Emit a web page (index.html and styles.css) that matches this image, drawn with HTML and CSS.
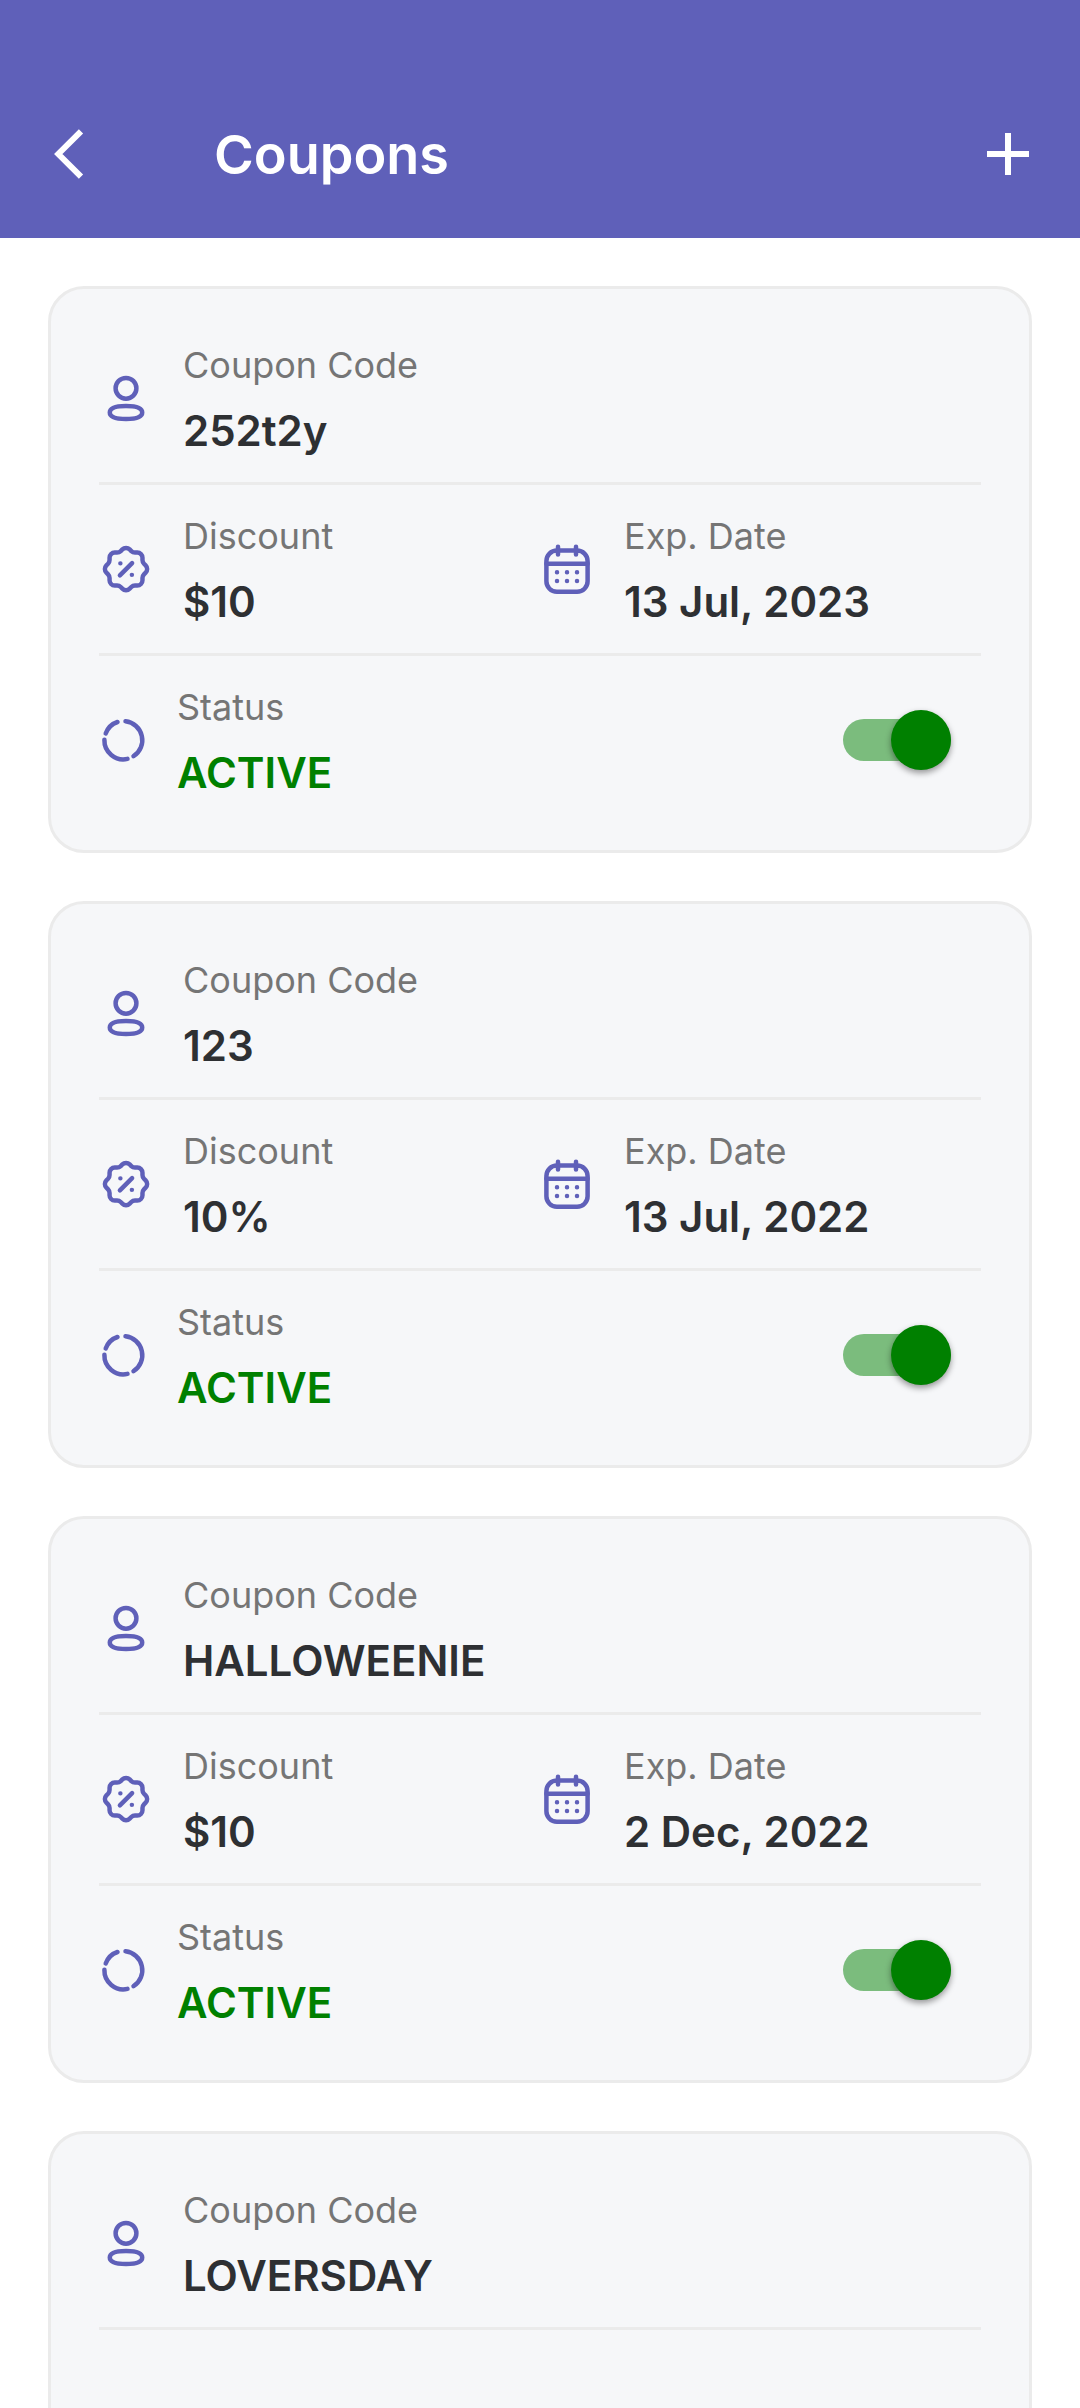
FILE: index.html
```html
<!DOCTYPE html>
<html lang="en">
<head>
    <meta charset="UTF-8">
    <meta name="viewport" content="width=device-width, initial-scale=1.0">
    <title>Coupons</title>
    <link rel="stylesheet" href="styles.css">
</head>
<body>
    <!-- Shared icons -->
    <svg class="sprite" aria-hidden="true">
        <symbol id="icon-user" viewBox="0 0 54 54" stroke-width="4.5">
            <circle cx="27" cy="17.3" r="10.4"/>
            <path d="M27 35c8.5 0 16.2 1.3 16.2 6.5S35.5 48 27 48s-16.200-1.300-16.200-6.500S18.500 35 27 35z"/>
        </symbol>
        <symbol id="icon-discount" viewBox="0.5 0.5 23 23" stroke-width="1.9">
            <path d="M5 7.2a2.2 2.2 0 0 1 2.2-2.2h1a2.2 2.2 0 0 0 1.550-.64l.7-.7a2.2 2.2 0 0 1 3.120 0l.7.7a2.2 2.2 0 0 0 1.550.64h1a2.2 2.2 0 0 1 2.2 2.2v1a2.2 2.2 0 0 0 .64 1.550l.7.7a2.2 2.2 0 0 1 0 3.120l-.7.7a2.2 2.2 0 0 0-.64 1.550v1a2.2 2.2 0 0 1-2.2 2.2h-1a2.2 2.2 0 0 0-1.550.64l-.7.7a2.2 2.2 0 0 1-3.120 0l-.7-.7a2.2 2.2 0 0 0-1.550-.64h-1a2.2 2.2 0 0 1-2.2-2.2v-1a2.2 2.2 0 0 0-.64-1.550l-.7-.7a2.2 2.2 0 0 1 0-3.120l.7-.7a2.2 2.2 0 0 0 .64-1.550z"/>
            <path d="M9.4 14.7l5.2-5.2M9.6 9.6h.01M14.5 14.5h.01"/>
        </symbol>
        <symbol id="icon-calendar" viewBox="0 0 54 54" stroke-width="4.5">
            <rect x="6.4" y="8.6" width="41.2" height="41.2" rx="10.5"/>
            <path d="M6.4 21.7h41.2M18 4.8v7.8M36 4.8v7.8"/>
            <path d="M17 30.3h.01M27 30.3h.01M37 30.3h.01M17 39h.01M27 39h.01M37 39h.01"/>
        </symbol>
        <symbol id="icon-status" viewBox="0 0 48 48" stroke-width="4.5">
            <path d="M26.5 5.3A19 19 0 0 1 34.5 40.2M28.5 42.9A19 19 0 0 1 5.4 23.8M6.7 17.5A19 19 0 0 1 18.5 6"/>
        </symbol>
    </svg>

    <header class="app-bar">
        <button class="icon-button" type="button" aria-label="Back">
            <svg viewBox="0 0 48 48"><path d="M33 1.300L10.300 24 33 46.700"/></svg>
        </button>
        <h1 class="app-title">Coupons</h1>
        <button class="icon-button" type="button" aria-label="Add coupon">
            <svg viewBox="0 0 48 48"><path d="M24 3v42M3 24h42"/></svg>
        </button>
    </header>

    <main class="coupon-list">
        <article class="coupon">
            <div class="row">
                <div class="field">
                    <svg class="icon"><use href="#icon-user"/></svg>
                    <div class="field-text">
                        <p class="label">Coupon Code</p>
                        <p class="value">252t2y</p>
                    </div>
                </div>
            </div>
            <div class="row">
                <div class="field">
                    <svg class="icon"><use href="#icon-discount"/></svg>
                    <div class="field-text">
                        <p class="label">Discount</p>
                        <p class="value">$10</p>
                    </div>
                </div>
                <div class="field">
                    <svg class="icon"><use href="#icon-calendar"/></svg>
                    <div class="field-text">
                        <p class="label">Exp. Date</p>
                        <p class="value">13 Jul, 2023</p>
                    </div>
                </div>
            </div>
            <div class="row">
                <div class="field">
                    <svg class="icon icon-small"><use href="#icon-status"/></svg>
                    <div class="field-text">
                        <label class="label" for="status-1">Status</label>
                        <p class="value active">ACTIVE</p>
                    </div>
                </div>
                <input class="switch" type="checkbox" id="status-1" checked>
            </div>
        </article>

        <article class="coupon">
            <div class="row">
                <div class="field">
                    <svg class="icon"><use href="#icon-user"/></svg>
                    <div class="field-text">
                        <p class="label">Coupon Code</p>
                        <p class="value">123</p>
                    </div>
                </div>
            </div>
            <div class="row">
                <div class="field">
                    <svg class="icon"><use href="#icon-discount"/></svg>
                    <div class="field-text">
                        <p class="label">Discount</p>
                        <p class="value">10%</p>
                    </div>
                </div>
                <div class="field">
                    <svg class="icon"><use href="#icon-calendar"/></svg>
                    <div class="field-text">
                        <p class="label">Exp. Date</p>
                        <p class="value">13 Jul, 2022</p>
                    </div>
                </div>
            </div>
            <div class="row">
                <div class="field">
                    <svg class="icon icon-small"><use href="#icon-status"/></svg>
                    <div class="field-text">
                        <label class="label" for="status-2">Status</label>
                        <p class="value active">ACTIVE</p>
                    </div>
                </div>
                <input class="switch" type="checkbox" id="status-2" checked>
            </div>
        </article>

        <article class="coupon">
            <div class="row">
                <div class="field">
                    <svg class="icon"><use href="#icon-user"/></svg>
                    <div class="field-text">
                        <p class="label">Coupon Code</p>
                        <p class="value">HALLOWEENIE</p>
                    </div>
                </div>
            </div>
            <div class="row">
                <div class="field">
                    <svg class="icon"><use href="#icon-discount"/></svg>
                    <div class="field-text">
                        <p class="label">Discount</p>
                        <p class="value">$10</p>
                    </div>
                </div>
                <div class="field">
                    <svg class="icon"><use href="#icon-calendar"/></svg>
                    <div class="field-text">
                        <p class="label">Exp. Date</p>
                        <p class="value">2 Dec, 2022</p>
                    </div>
                </div>
            </div>
            <div class="row">
                <div class="field">
                    <svg class="icon icon-small"><use href="#icon-status"/></svg>
                    <div class="field-text">
                        <label class="label" for="status-3">Status</label>
                        <p class="value active">ACTIVE</p>
                    </div>
                </div>
                <input class="switch" type="checkbox" id="status-3" checked>
            </div>
        </article>

        <article class="coupon">
            <div class="row">
                <div class="field">
                    <svg class="icon"><use href="#icon-user"/></svg>
                    <div class="field-text">
                        <p class="label">Coupon Code</p>
                        <p class="value">LOVERSDAY</p>
                    </div>
                </div>
            </div>
            <!-- details not loaded yet -->
            <div class="row"></div>
        </article>
    </main>
</body>
</html>
```

FILE: styles.css
```css
* {
    box-sizing: border-box;
}
body {
    display: flex;
    flex-direction: column;
    height: 100vh;
    margin: 0;
    background-color: #fff;
    color: #2e3033;
    font-family: Inter, "Liberation Sans", sans-serif;
}
h1, p {
    margin: 0;
}
svg {
    fill: none;
    stroke: currentColor;
    stroke-linecap: round;
    stroke-linejoin: round;
}
.sprite {
    display: none;
}

/* Top bar */
.app-bar {
    display: flex;
    align-items: center;
    flex-shrink: 0;
    padding: 118px 48px 48px;
    background-color: #5f60b9;
    color: #fff;
}
.app-title {
    flex: 1;
    margin-left: 118px;
    padding-top: 2px;
    font-size: 54px;
    font-weight: 600;
    line-height: 70px;
}
.icon-button {
    width: 48px;
    height: 48px;
    padding: 0;
    border: 0;
    background: none;
    color: inherit;
}
.icon-button svg {
    display: block;
    width: 48px;
    height: 48px;
    overflow: visible;
    stroke-width: 6;
    stroke-linecap: butt;
    stroke-linejoin: miter;
}

/* Coupons */
.coupon-list {
    flex: 1;
    display: flex;
    flex-direction: column;
    gap: 48px;
    min-height: 0;
    padding: 48px;
    overflow-y: auto;
    scrollbar-width: none;
}
.coupon {
    flex-shrink: 0;
    padding: 25px 48px 26px;
    border: 3px solid #ebebeb;
    border-radius: 36px;
    background-color: #f6f7f9;
}
.row {
    display: flex;
    align-items: center;
    min-height: 168px;
}
.row + .row {
    border-top: 3px solid #ebebeb;
    min-height: 171px;
}
.field {
    display: flex;
    align-items: center;
    flex: 1;
    gap: 30px;
}
.icon {
    flex-shrink: 0;
    width: 54px;
    height: 54px;
    color: #5f60b9;
}
.icon-small {
    width: 48px;
    height: 48px;
}
.field-text {
    line-height: 66px;
}
.label {
    display: block;
    color: #757575;
    font-size: 36px;
}
.value {
    font-size: 42px;
    font-weight: 600;
}
.active {
    color: #008000;
}

/* Status switch */
.switch {
    appearance: none;
    position: relative;
    width: 108px;
    height: 42px;
    margin: 0 30px 0 0;
    border-radius: 21px;
    background-color: #c4c4c6;
}
.switch::after {
    content: "";
    position: absolute;
    top: -9px;
    left: 0;
    width: 60px;
    height: 60px;
    border-radius: 50%;
    background-color: #fff;
    box-shadow: 0 3px 6px rgba(0, 0, 0, 0.4);
}
.switch:checked {
    background-color: #7bbc7d;
}
.switch:checked::after {
    left: 48px;
    background-color: #008000;
}
```
